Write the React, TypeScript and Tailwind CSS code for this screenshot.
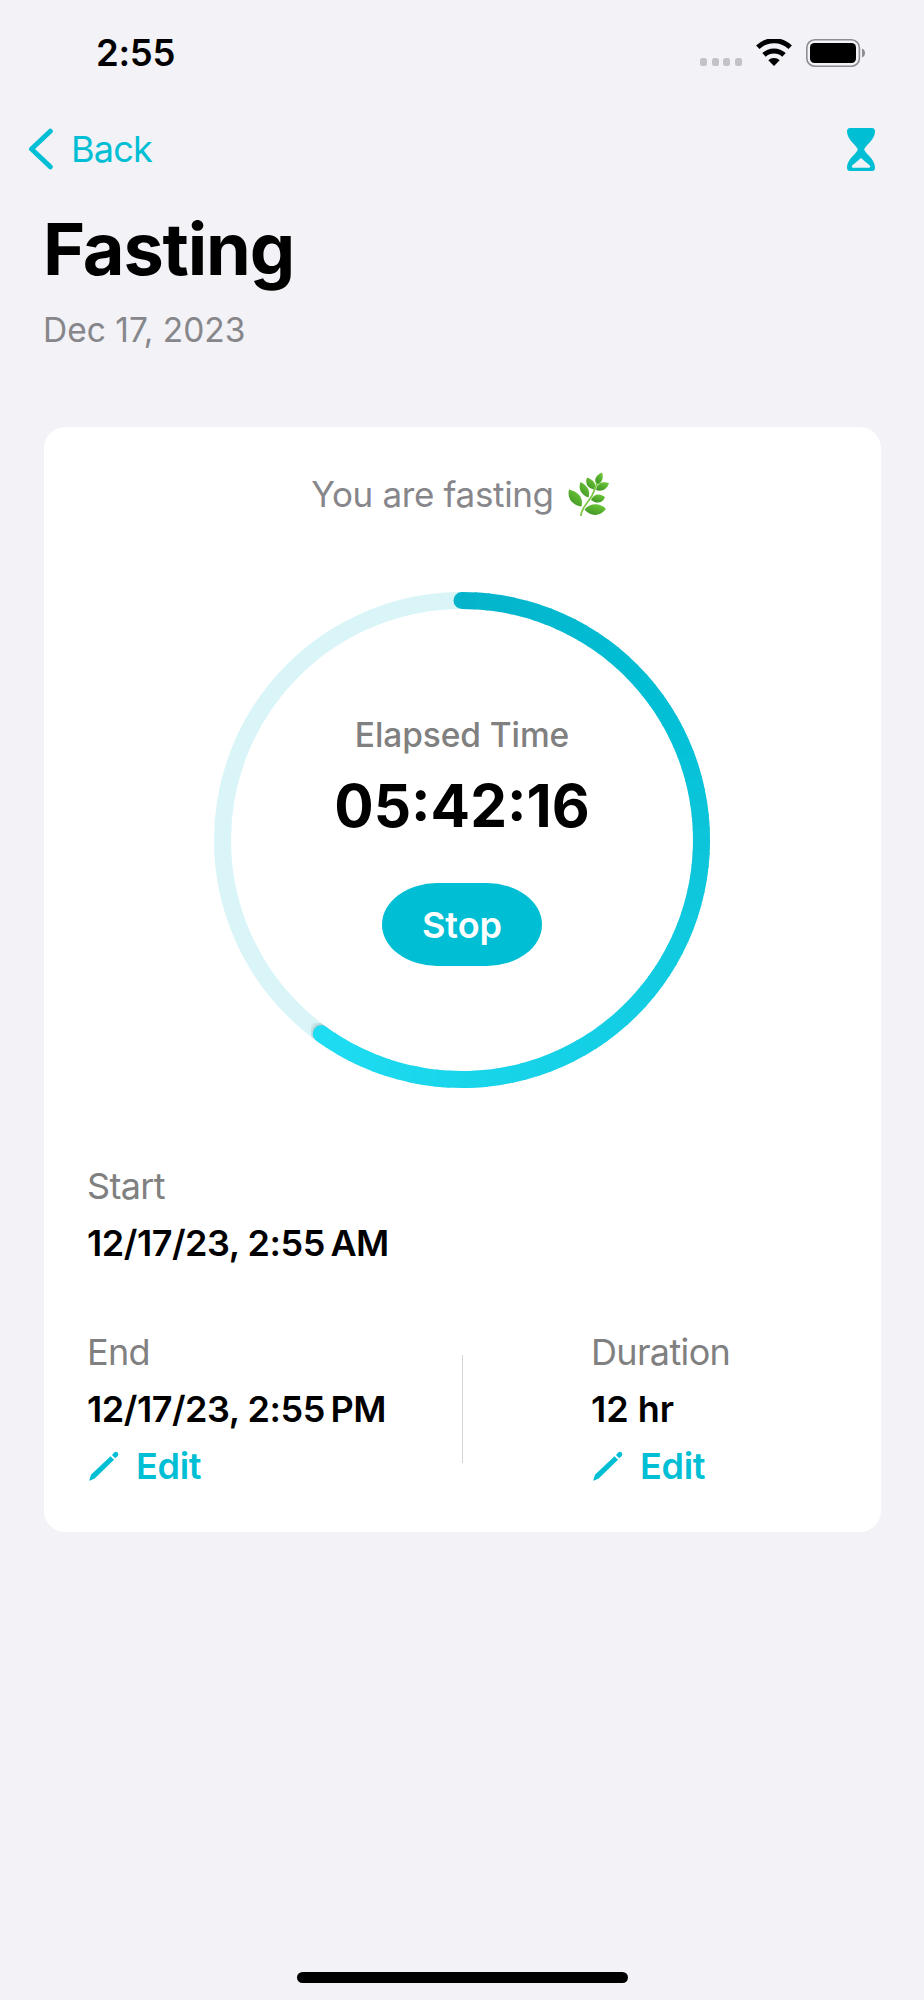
import type { ReactNode } from "react";

const RING_SIZE = 498;
const RING_STROKE = 17;
const RING_CENTER = RING_SIZE / 2;
const RING_RADIUS = 239.5;
const PROGRESS_DEG = 216;

const RING_STOPS: [number, number[]][] = [
  [0, [5, 180, 203]],
  [50, [0, 190, 212]],
  [90, [12, 197, 219]],
  [216, [30, 220, 241]],
];

function ringPoint(deg: number) {
  const rad = ((deg - 90) * Math.PI) / 180;
  return [
    RING_CENTER + RING_RADIUS * Math.cos(rad),
    RING_CENTER + RING_RADIUS * Math.sin(rad),
  ];
}

function ringColor(deg: number) {
  const next = Math.max(
    1,
    RING_STOPS.findIndex(([stop]) => stop >= deg),
  );
  const [fromDeg, from] = RING_STOPS[next - 1];
  const [toDeg, to] = RING_STOPS[next];
  const t = (deg - fromDeg) / (toDeg - fromDeg);
  return `rgb(${from.map((c, i) => Math.round(c + (to[i] - c) * t)).join(",")})`;
}

function ringArc(from: number, to: number) {
  const [x1, y1] = ringPoint(from);
  const [x2, y2] = ringPoint(to);
  return `M${x1} ${y1}A${RING_RADIUS} ${RING_RADIUS} 0 0 1 ${x2} ${y2}`;
}

function ProgressRing({ children }: { children: ReactNode }) {
  const step = 3;
  const segments = Array.from({ length: PROGRESS_DEG / step }, (_, i) => i * step);
  const [startX, startY] = ringPoint(0);
  const [endX, endY] = ringPoint(PROGRESS_DEG);

  return (
    <div className="mx-auto grid w-[498px]">
      <svg
        width={RING_SIZE}
        height={RING_SIZE}
        className="[grid-area:1/1]"
        fill="none"
        strokeWidth={RING_STROKE}
      >
        <defs>
          <filter id="tip-blur" x="-100%" y="-100%" width="300%" height="300%">
            <feGaussianBlur stdDeviation="3" />
          </filter>
          <mask id="track">
            <circle cx={RING_CENTER} cy={RING_CENTER} r={RING_RADIUS} stroke="#fff" />
          </mask>
        </defs>
        <circle cx={RING_CENTER} cy={RING_CENTER} r={RING_RADIUS} stroke="#d9f5f8" />
        <g mask="url(#track)">
          <circle
            cx={endX}
            cy={endY - 1}
            r={8.5}
            fill="#000"
            fillOpacity={0.33}
            stroke="none"
            filter="url(#tip-blur)"
          />
        </g>
        <circle cx={startX} cy={startY} r={8.5} fill={ringColor(0)} stroke="none" />
        <circle cx={endX} cy={endY} r={8.5} fill={ringColor(PROGRESS_DEG)} stroke="none" />
        {segments.map((deg) => (
          <path
            key={deg}
            d={ringArc(deg, Math.min(deg + step + 0.4, PROGRESS_DEG))}
            stroke={ringColor(deg + step / 2)}
          />
        ))}
      </svg>
      <div className="flex flex-col items-center pt-[124px] [grid-area:1/1]">{children}</div>
    </div>
  );
}

function WifiIcon() {
  return (
    <svg width="36" height="27" viewBox="0 0 36 27" fill="none" stroke="#000" strokeWidth="5">
      <path d="M1.8 8.2A23.5 23.5 0 0 1 34.2 8.2" />
      <path d="M8 15.9A14.5 14.5 0 0 1 28 15.9" />
      <path
        d="M18 27L12.3 21.3Q14.6 18.9 18 18.9Q21.4 18.9 23.7 21.3Z"
        fill="#000"
        stroke="none"
      />
    </svg>
  );
}

function BatteryIcon() {
  return (
    <svg width="60" height="28" viewBox="0 0 60 28">
      <rect x="0.8" y="0.8" width="52.6" height="26.4" rx="8" fill="none" stroke="#8e8e92" strokeWidth="1.6" />
      <rect x="4" y="4" width="46" height="20" rx="4.5" />
      <path d="M56 9.5Q59 10.8 59 14Q59 17.2 56 18.5Z" fill="#8e8e92" />
    </svg>
  );
}

function HourglassIcon() {
  return (
    <svg width="28" height="43" viewBox="0 0 28 43" fill="#00bed4">
      <path
        fillRule="evenodd"
        d="M3 0H25Q28 0 28 3.5C28 12 18 17.5 17.2 21.5C18 25.5 28 31 28 39.5Q28 43 25 43H3Q0 43 0 39.5C0 31 10 25.5 10.8 21.5C10 17.5 0 12 0 3.5Q0 0 3 0ZM14 30L5.2 37.6Q4 39.6 6 39.7H22Q24 39.6 22.8 37.6Z"
      />
    </svg>
  );
}

function HerbIcon() {
  return (
    <svg width="42" height="45" viewBox="0 0 42 45">
      <defs>
        <linearGradient id="leaf" x1="0" y1="1" x2="0.6" y2="0">
          <stop offset="0" stopColor="#3a8f22" />
          <stop offset="1" stopColor="#6cc437" />
        </linearGradient>
      </defs>
      <g fill="url(#leaf)">
        <path d="M34 0.5C36 6 34 11 29 12.5C25 8 28 3 34 0.5Z" />
        <path d="M19 5.5C26 8 29 12 26 17.5C19 16 17 11 19 5.5Z" />
        <path d="M41 11C39 18 33 20 28 18C29 11 34 9 41 11Z" />
        <path d="M12.5 10C20 14 22.5 19 20.5 25.5C13 23 10 17 12.5 10Z" />
        <path d="M1 17.5C11 20 15.5 26 13.5 34.5C4 33 -1 26 1 17.5Z" />
        <path d="M37 25C35 31.5 28 32 23 28C25 22 32 20.5 37 25Z" />
        <path d="M38 37C32 45 22 44.5 16.5 37.5C22 31 32 30.5 38 37Z" />
      </g>
      <path d="M12.8 44C13 36 20 31 24 23.5C26 19.5 27.5 16 29 11" fill="none" stroke="#7cc843" strokeWidth="1.7" />
    </svg>
  );
}

function PencilIcon() {
  return (
    <svg width="30" height="30" viewBox="0 0 30 30" fill="#00bed4" className="mb-[2px]">
      <path d="M0.3 29.3L2 23.8L21.5 5.3L25 8.8L5.7 27.5L0.7 29.7Z" />
      <path d="M22.9 3.9L25.3 1.4Q27 0 28.7 1.6Q30 3.3 28.8 4.9L26.3 7.3Z" />
    </svg>
  );
}

function Field({ label, children, editable }: { label: string; children: ReactNode; editable?: boolean }) {
  return (
    <div className="text-[36px] leading-[57px] whitespace-nowrap">
      <div className="tracking-[-0.65px] text-[#808080]">{label}</div>
      <div className="font-semibold tracking-[-0.47px]">{children}</div>
      {editable && (
        <button className="flex items-center gap-[17px] pl-[2px] font-semibold tracking-[-0.3px] text-[#00bed4]">
          <PencilIcon />
          Edit
        </button>
      )}
    </div>
  );
}

export default function App() {
  return (
    <main className="flex h-[2000px] w-[924px] flex-col bg-[#f2f2f7] font-['Inter',sans-serif] text-black">
      <div className="flex h-[105px] items-center pr-[58px] pl-[96px]">
        <span className="pt-[2px] text-[36.5px] font-semibold tracking-[-0.3px]">2:55</span>
        <div className="ml-auto flex items-center">
          <div className="mt-[19px] mr-[14px] flex gap-[4.4px]">
            {[0, 1, 2, 3].map((dot) => (
              <span key={dot} className="h-[8px] w-[7.2px] rounded-[2.5px] bg-[#c2c2c7]" />
            ))}
          </div>
          <WifiIcon />
          <div className="ml-[14px]">
            <BatteryIcon />
          </div>
        </div>
      </div>

      <nav className="flex h-[88px] items-center justify-between pr-[49px] pl-[28px] text-[#00bed4]">
        <button className="flex items-center gap-[17px] text-[36px] tracking-[-0.8px]">
          <svg width="26" height="42" viewBox="0 0 26 42" fill="none" stroke="#00bed4" strokeWidth="5" strokeLinecap="round" strokeLinejoin="round">
            <path d="M22.3 3.2L3.5 21L22.3 38.8" />
          </svg>
          Back
        </button>
        <HourglassIcon />
      </nav>

      <header className="mt-4 px-[43px]">
        <h1 className="text-[72px] leading-[80px] font-bold tracking-[-1.2px]">Fasting</h1>
        <p className="mt-[21px] text-[33.5px] leading-[40px] text-[#87878b]">Dec 17, 2023</p>
      </header>

      <section className="mx-[43.5px] mt-[77px] h-[1105px] rounded-[21px] bg-white pt-[45px]">
        <div className="flex h-[44px] items-center justify-center gap-[14px] pr-[3px] text-[35px] tracking-[-0.35px] text-[#87878b]">
          You are fasting
          <HerbIcon />
        </div>

        <div className="mt-[75px]">
          <ProgressRing>
            <p className="text-[33.5px] leading-[40px] font-medium tracking-[-0.1px] text-[#808080]">
              Elapsed Time
            </p>
            <p className="mt-[19px] text-[58.5px] leading-[64px] font-bold">05:42:16</p>
            <button className="mt-[45px] flex h-[83px] w-[160px] items-center justify-center rounded-[56px/42px] bg-[#00bed4] pt-px text-[36px] font-semibold text-white">
              Stop
            </button>
          </ProgressRing>
        </div>

        <div className="mt-[69px] px-[43.5px]">
          <Field label="Start">12/17/23, 2:55{"\u202f"}AM</Field>
          <div className="mt-[52px] flex items-center">
            <div className="w-[375px]">
              <Field label="End" editable>
                12/17/23, 2:55{"\u202f"}PM
              </Field>
            </div>
            <div className="mb-[2px] h-[108px] w-px bg-[#d4d4d6]" />
            <div className="ml-[128px]">
              <Field label="Duration" editable>
                <span className="tracking-normal">12 hr</span>
              </Field>
            </div>
          </div>
        </div>
      </section>

      <div className="mx-auto mt-auto mb-[17.5px] h-[11px] w-[331px] rounded-full bg-black" />
    </main>
  );
}
